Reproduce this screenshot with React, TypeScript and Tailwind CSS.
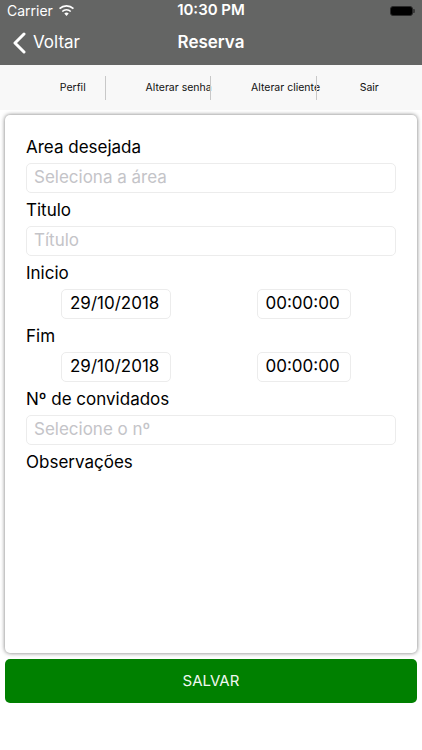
import React from 'react';

const tabs = [
  { label: 'Perfil', cls: 'pl-[40px]', divider: true },
  { label: 'Alterar senha', cls: 'pl-[40px]', divider: true },
  { label: 'Alterar cliente', cls: 'pl-[40px]', divider: true },
  { label: 'Sair', cls: '', divider: false },
];

function Label({ children }: { children: React.ReactNode }) {
  return <p className="h-[20px] text-[17px] leading-[20px] text-black">{children}</p>;
}

function Field({ placeholder }: { placeholder: string }) {
  return (
    <div className="mt-[6px] mb-[7px] flex h-[30px] items-center rounded-[5px] border border-[#ececec] px-[7px] text-[17px] text-[#c4c4c8]">
      {placeholder}
    </div>
  );
}

function DateRow() {
  return (
    <div className="mt-[6px] mb-[7px] grid h-[30px] grid-cols-2">
      <div className="flex justify-center pr-[5px]">
        <div className="flex h-[30px] w-[110px] items-center rounded-[5px] border border-[#ececec] px-[8px] text-[17px] text-black">
          29/10/2018
        </div>
      </div>
      <div className="flex justify-center">
        <div className="flex h-[30px] w-[94px] items-center rounded-[5px] border border-[#ececec] px-[8px] text-[17px] text-black">
          00:00:00
        </div>
      </div>
    </div>
  );
}

export default function App() {
  return (
    <div className="flex h-[750px] w-[422px] flex-col bg-white font-['Inter',sans-serif]">
      {/* status bar */}
      <div className="flex h-[21px] items-center justify-between bg-[#646564] px-[7px] text-white">
        <div className="flex w-[120px] items-center gap-[6px] text-[14px]">
          <span>Carrier</span>
          <svg width="15" height="11" viewBox="0 0 15 11" fill="white">
            <path d="M7.5 11 5.3 8.6a3.2 3.2 0 0 1 4.4 0Z" />
            <path d="M3.8 7.1a5.3 5.3 0 0 1 7.4 0l1.1-1.2a7 7 0 0 0-9.6 0Z" />
            <path d="M1.1 4.3a9.2 9.2 0 0 1 12.8 0L15 3.1a10.9 10.9 0 0 0-15 0Z" />
          </svg>
        </div>
        <span className="text-[15px] font-semibold">10:30 PM</span>
        <div className="flex w-[120px] justify-end">
          <div className="flex items-center">
            <div className="h-[10px] w-[23px] rounded-[3px] border border-[#2a2a2a] bg-black p-[1px]" />
            <div className="h-[4px] w-[2px] rounded-r-[1px] bg-[#3a3a3a]" />
          </div>
        </div>
      </div>

      {/* nav bar */}
      <div className="relative flex h-[44px] items-center bg-[#646564] text-white">
        <div className="flex items-center gap-[7px] pl-[13px]">
          <svg width="13" height="22" viewBox="0 0 13 22" fill="none" stroke="white" strokeWidth="3" strokeLinecap="round" strokeLinejoin="round">
            <path d="M11 2 2 11l9 9" />
          </svg>
          <span className="text-[17px]">Voltar</span>
        </div>
        <span className="absolute left-1/2 -translate-x-1/2 text-[17px] font-semibold">Reserva</span>
      </div>

      {/* tabs */}
      <div className="flex h-[45px] items-center bg-[#f8f8f8]">
        {tabs.map((t) => (
          <div key={t.label} className="relative flex h-full w-[105.5px] items-center">
            <div className={`flex flex-1 justify-center whitespace-nowrap text-[10.5px] text-[#111] ${t.cls}`}>{t.label}</div>
            {t.divider && <div className="absolute right-0 top-[11px] h-[24px] w-px bg-[#c8c8c8]" />}
          </div>
        ))}
      </div>

      <div className="flex flex-1 flex-col bg-white px-[5px] pt-[5px]">
        {/* card */}
        <div className="h-[538px] rounded-[5px] bg-white px-[21px] pt-[22px] shadow-[0_0_4px_rgba(0,0,0,0.55)]">
          <Label>Area desejada</Label>
          <Field placeholder="Seleciona a área" />
          <Label>Titulo</Label>
          <Field placeholder="Título" />
          <Label>Inicio</Label>
          <DateRow />
          <Label>Fim</Label>
          <DateRow />
          <Label>Nº de convidados</Label>
          <Field placeholder="Selecione o nº" />
          <Label>Observações</Label>
        </div>

        <button className="mt-[6px] flex h-[44px] items-center justify-center rounded-[5px] bg-[#008000] text-[15px] text-[#f0f8f0]">
          SALVAR
        </button>
      </div>
    </div>
  );
}
